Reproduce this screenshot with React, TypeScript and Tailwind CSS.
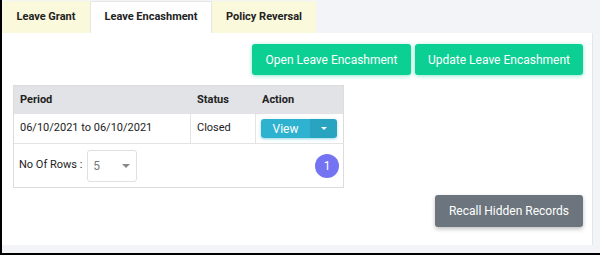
import React from "react";

export default function App() {
  const font = { fontFamily: "Roboto, 'Liberation Sans', sans-serif" };
  return (
    <div
      className="w-[600px] h-[255px] bg-[#f3f4f8] border-l-2 border-b-2 border-black flex flex-col overflow-hidden"
      style={font}
    >
      {/* tab bar */}
      <div className="h-[33px] pt-[1px] flex items-stretch text-[11px] font-bold text-[#222]">
        <div className="w-[88px] bg-[#fbf9dc] flex items-center justify-center">Leave Grant</div>
        <div className="w-[122px] bg-white border-x border-t border-[#e6e6e6] flex items-center justify-center">
          Leave Encashment
        </div>
        <div className="w-[104px] bg-[#fbf9dc] flex items-center justify-center">Policy Reversal</div>
      </div>
      {/* content panel */}
      <div className="w-[591px] h-[212px] bg-white border-r border-[#e6e6ea] flex flex-col">
        <div className="flex justify-end gap-[4px] pt-[11px] pr-[9px]">
          <button className="h-[31px] w-[159px] rounded-[3px] bg-[#0ccf94] text-white text-[12px] shadow-[0_1px_4px_rgba(12,207,148,0.45)]">
            Open Leave Encashment
          </button>
          <button className="h-[31px] w-[168px] rounded-[3px] bg-[#0ccf94] text-white text-[12px] shadow-[0_1px_4px_rgba(12,207,148,0.45)]">
            Update Leave Encashment
          </button>
        </div>
        <div className="flex">
          <div className="ml-[11px] mt-[10px] w-[331px] border border-[#dcdcdc] text-[11px] text-[#222]">
            <div className="flex h-[28px] bg-[#e2e3e6] font-bold items-center">
              <div className="w-[177px] pl-[6px]">Period</div>
              <div className="w-[65px] pl-[6px]">Status</div>
              <div className="flex-1 pl-[6px]">Action</div>
            </div>
            <div className="flex h-[30px] items-stretch border-b border-[#e4e4e4]">
              <div className="w-[177px] pl-[6px] flex items-center border-r border-[#e4e4e4]">06/10/2021 to 06/10/2021</div>
              <div className="w-[65px] pl-[6px] flex items-center border-r border-[#e4e4e4]">Closed</div>
              <div className="flex-1 pl-[5px] flex items-center">
                <div className="flex h-[19px] w-[76px] rounded-[3px] overflow-hidden shadow-[0_1px_3px_rgba(47,176,204,0.5)]">
                  <div className="w-[49px] bg-[#2fb2cf] text-white text-[12px] flex items-center justify-center">View</div>
                  <div className="flex-1 bg-[#29a4c0] flex items-center justify-center">
                    <div className="w-0 h-0 border-l-[3px] border-r-[3px] border-t-[3px] border-l-transparent border-r-transparent border-t-white" />
                  </div>
                </div>
              </div>
            </div>
            <div className="flex items-center h-[43px] pl-[5px] pr-[4px]">
              <span>No Of Rows :</span>
              <div className="ml-[5px] w-[50px] h-[32px] border border-[#e0e0e0] rounded-[3px] flex items-center justify-between pl-[5px] pr-[6px] text-[#777] text-[12px]">
                <span>5</span>
                <div className="w-0 h-0 border-l-[4px] border-r-[4px] border-t-[4px] border-l-transparent border-r-transparent border-t-[#888]" />
              </div>
              <div className="ml-auto w-[24px] h-[24px] rounded-full bg-[#7474f2] text-white text-[12px] flex items-center justify-center">
                1
              </div>
            </div>
          </div>
        </div>
        <div className="flex justify-end pr-[9px] mt-[7px]">
          <button className="h-[32px] w-[148px] rounded-[3px] bg-[#6c757d] text-white text-[12px] shadow-[0_2px_4px_rgba(0,0,0,0.25)]">
            Recall Hidden Records
          </button>
        </div>
      </div>
    </div>
  );
}
